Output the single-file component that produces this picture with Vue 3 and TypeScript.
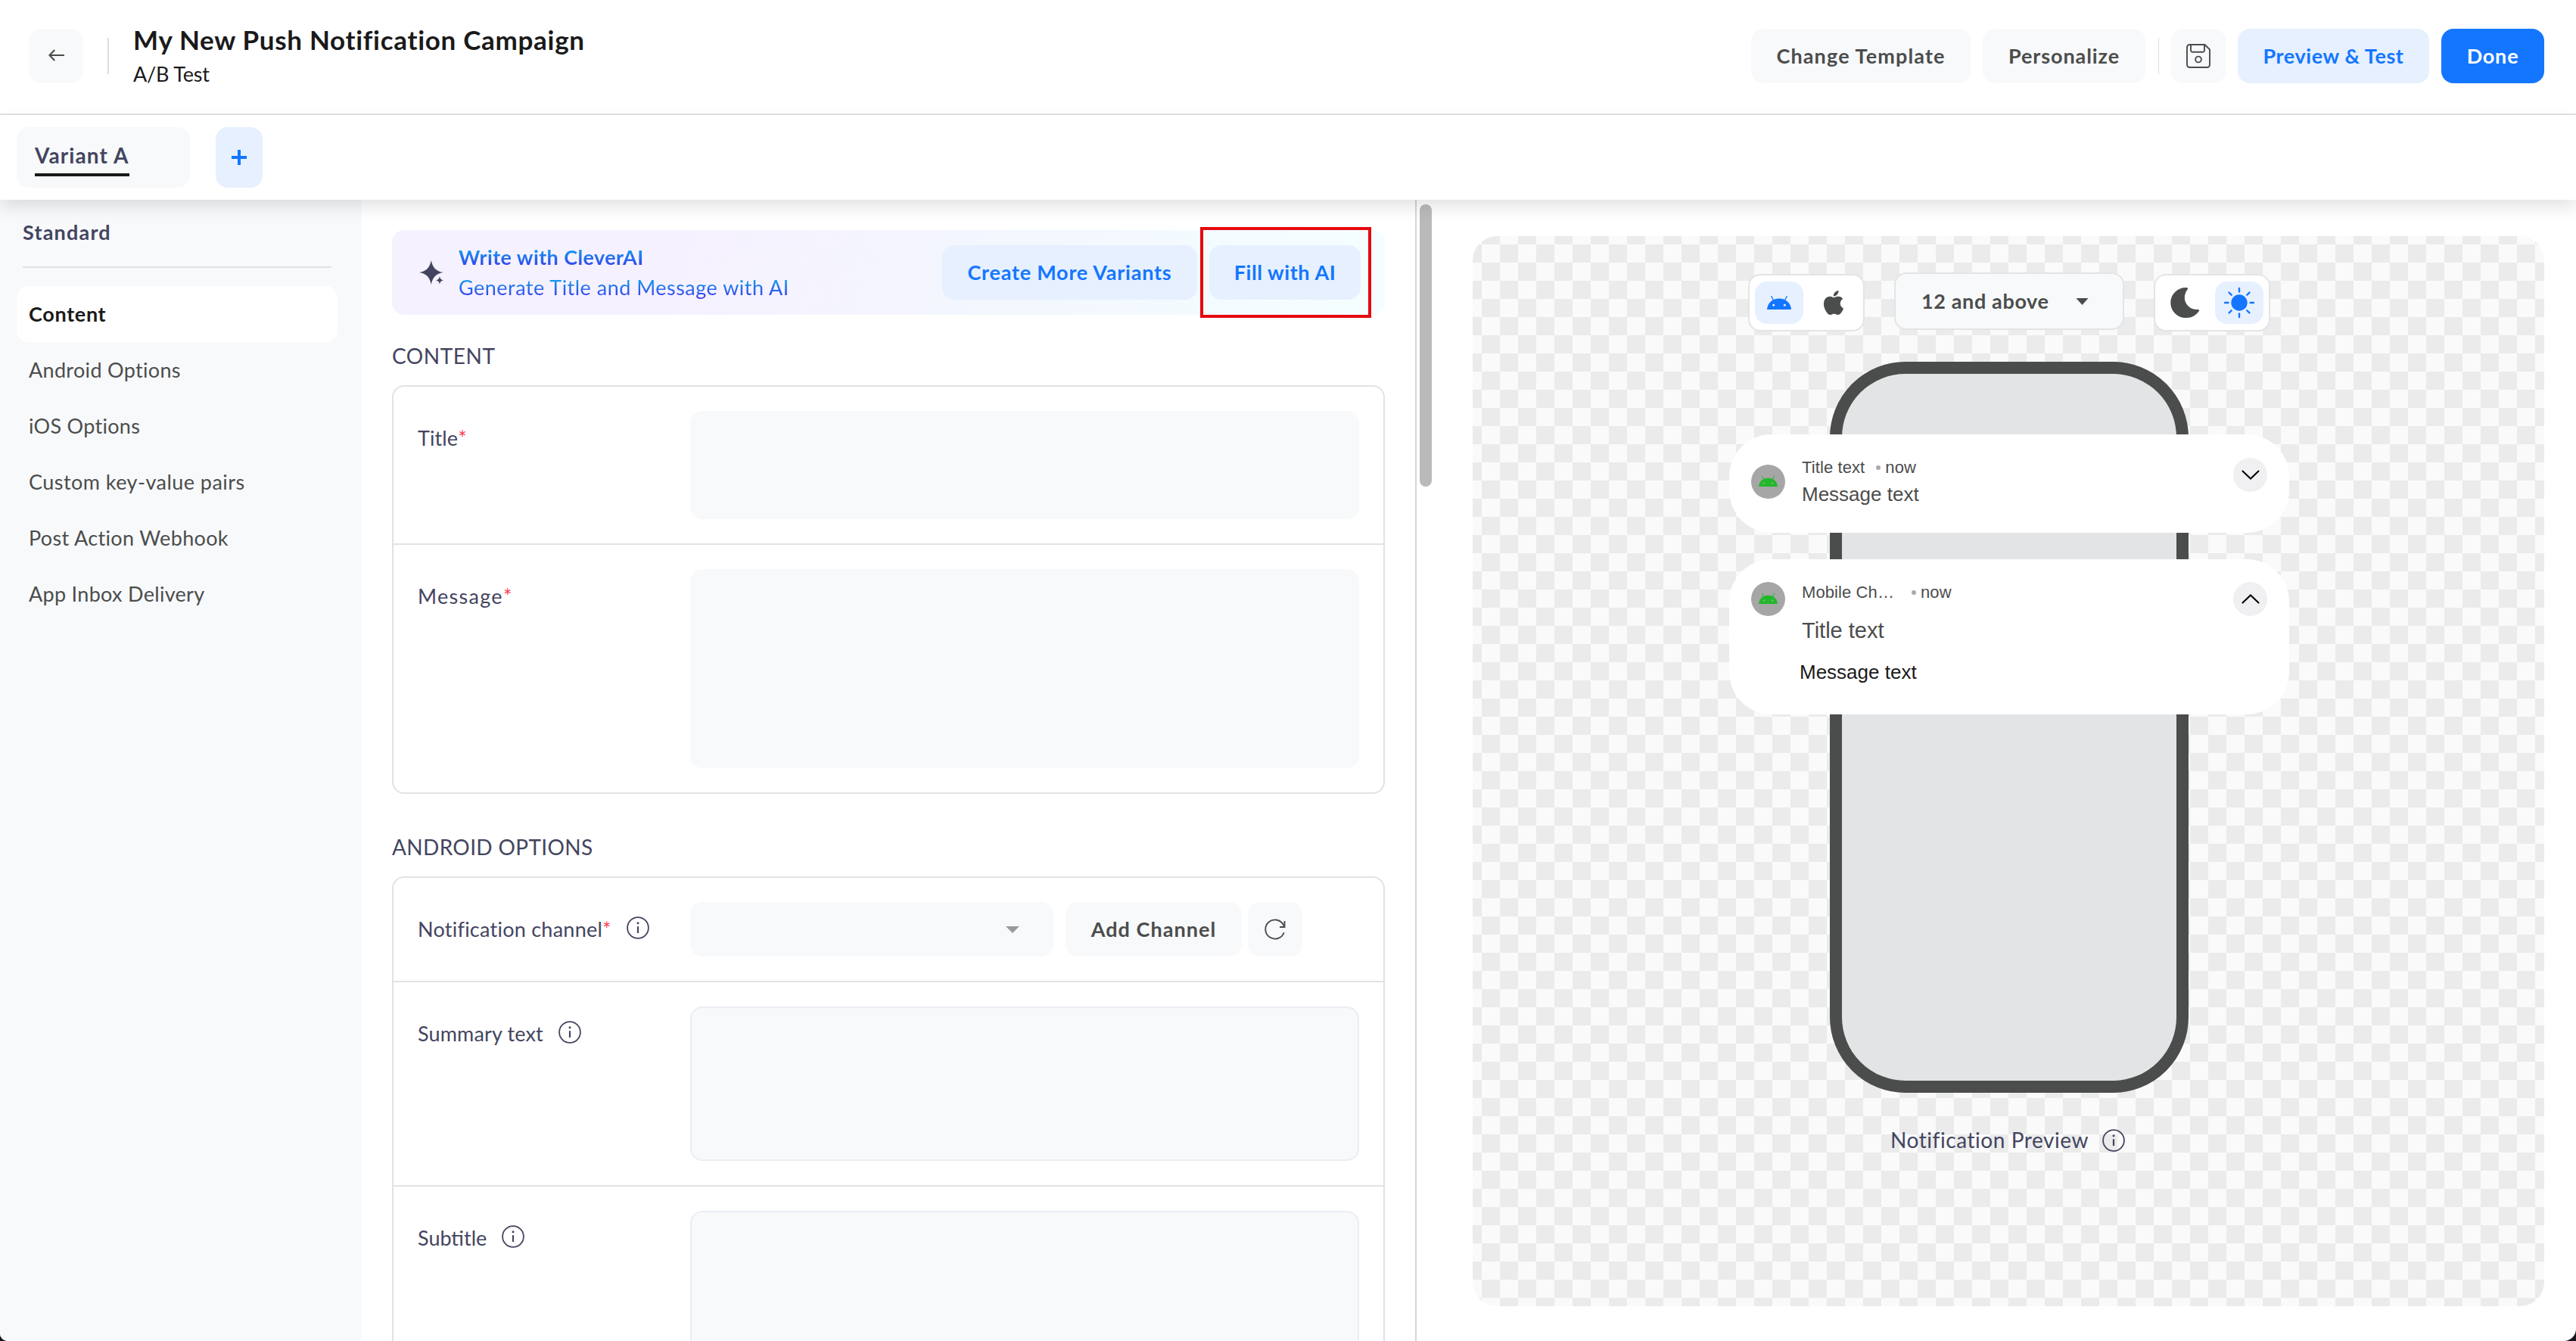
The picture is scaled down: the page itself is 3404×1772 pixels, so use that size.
<script setup lang="ts">
import { h, type FunctionalComponent } from 'vue'

interface MenuItem {
  label: string
  spacing: string
  active?: boolean
}

const menu: MenuItem[] = [
  { label: 'Content', spacing: '0.68px', active: true },
  { label: 'Android Options', spacing: '0.32px' },
  { label: 'iOS Options', spacing: '0.29px' },
  { label: 'Custom key-value pairs', spacing: '0.46px' },
  { label: 'Post Action Webhook', spacing: '0.35px' },
  { label: 'App Inbox Delivery', spacing: '0.3px' },
]

const InfoIcon: FunctionalComponent = () =>
  h('svg', { width: 30, height: 30, viewBox: '0 0 30 30', fill: 'none', style: 'display:block;flex:none' }, [
    h('circle', { cx: 15, cy: 15, r: 13.9, stroke: '#434560', 'stroke-width': 1.8 }),
    h('path', { d: 'M15 13.2V22', stroke: '#434560', 'stroke-width': 2.2 }),
    h('circle', { cx: 15, cy: 8.8, r: 1.5, fill: '#434560' }),
  ])

const AndroidIcon: FunctionalComponent<{ size: number; color: string; eye: string }> = (p) =>
  h('svg', { width: p.size, height: p.size * 0.5625, viewBox: '0 0 32 18', style: 'display:block' }, [
    h('path', { d: 'M0 18C.7 9.500 7 3.600 16 3.600S31.300 9.500 32 18Z', fill: p.color }),
    h('path', { d: 'M8.600 6L5.900.6M23.400 6L26.100.6', stroke: p.color, 'stroke-width': 1.3, 'stroke-linecap': 'round' }),
    h('circle', { cx: 8.7, cy: 12.2, r: 1.45, fill: p.eye }),
    h('circle', { cx: 23.3, cy: 12.2, r: 1.45, fill: p.eye }),
  ])
AndroidIcon.props = ['size', 'color', 'eye']

const rays = [0, 45, 90, 135, 180, 225, 270, 315]
</script>

<template>
  <div class="shell">
    <header class="header">
      <button class="btn back">
        <svg width="22" height="16" viewBox="0 0 22 16" fill="none" stroke="#4b4d4c" stroke-width="2.1">
          <path d="M8.200 1L1.500 8L8.200 15M1.500 8H21" />
        </svg>
      </button>
      <span class="rule"></span>
      <div class="titles">
        <h1>My New Push Notification Campaign</h1>
        <p>A/B Test</p>
      </div>
      <div class="actions">
        <button class="btn w-change">Change Template</button>
        <button class="btn w-person">Personalize</button>
        <span class="rule thin"></span>
        <button class="btn icon">
          <svg width="32" height="32" viewBox="0 0 32 32" fill="none" stroke="#4b4d4c" stroke-width="1.900">
            <path d="M4.500 1H24.500L31 7.500V27.500A3.500 3.500 0 0 1 27.500 31H4.500A3.500 3.500 0 0 1 1 27.500V4.500A3.500 3.500 0 0 1 4.500 1Z" />
            <path d="M6 1.500V8.500A2.300 2.300 0 0 0 8.300 10.800H21.700A2.300 2.300 0 0 0 24 8.500V1.500" />
            <circle cx="16" cy="20.500" r="3.900" />
          </svg>
        </button>
        <button class="btn soft w-preview">Preview &amp; Test</button>
        <button class="btn primary w-done">Done</button>
      </div>
    </header>

    <nav class="tabs">
      <div class="tab"><span>Variant A</span></div>
      <button class="add">
        <svg width="20" height="20" viewBox="0 0 20 20" stroke="#1476ff" stroke-width="4"><path d="M10 0V20M0 10H20" /></svg>
      </button>
    </nav>

    <div class="body">
      <aside class="side">
        <div class="side-title">Standard</div>
        <ul>
          <li v-for="m in menu" :key="m.label" :class="{ on: m.active }" :style="{ letterSpacing: m.spacing }">{{ m.label }}</li>
        </ul>
      </aside>

      <main class="form">
        <section class="ai">
          <svg class="spark" width="32" height="32" viewBox="0 0 32 32">
            <path d="M15.800 0C17.600 8.800 21.500 14.300 31.600 16C21.500 17.700 17.600 23.200 15.800 32C14 23.200 10.100 17.700 0 16C10.100 14.300 14 8.800 15.800 0Z" fill="#434560" />
            <path d="M27 18.500C27.700 22.800 28.800 25.500 33 26.500C28.800 27.500 27.700 30.200 27 34.500C26.300 30.200 25 27.500 20.500 26.500C25 25.500 26.300 22.800 27 18.500Z" fill="#f6f2ff" />
            <path d="M27 21.300C27.600 24.500 28.900 25.900 32 26.500C28.900 27.100 27.600 28.500 27 31.700C26.400 28.500 25.100 27.100 22 26.500C25.100 25.900 26.400 24.500 27 21.300Z" fill="#434560" />
          </svg>
          <div class="ai-text">
            <p class="strong">Write with CleverAI</p>
            <p>Generate Title and Message with AI</p>
          </div>
          <button class="btn soft w-create">Create More Variants</button>
          <button class="btn soft w-fill">Fill with AI<i class="marker"></i></button>
        </section>

        <h2 class="content-h">CONTENT</h2>
        <section class="card">
          <div class="row">
            <label class="l-title">Title<sup>*</sup></label>
            <div class="field title-field"></div>
          </div>
          <div class="row">
            <label class="l-message">Message<sup>*</sup></label>
            <div class="field message-field"></div>
          </div>
        </section>

        <h2 class="android-h">ANDROID OPTIONS</h2>
        <section class="card">
          <div class="row">
            <label class="l-channel">Notification channel<sup>*</sup><InfoIcon /></label>
            <div class="select">
              <svg width="18" height="9" viewBox="0 0 18 9"><path d="M0 0H18L9 9Z" fill="#98999b" /></svg>
            </div>
            <button class="btn w-add">Add Channel</button>
            <button class="btn icon refresh">
              <svg width="30" height="30" viewBox="0 0 30 30" fill="none" stroke="#4b4d4c" stroke-width="1.900">
                <path d="M26.700 19.200A12.600 12.600 0 1 1 26.300 9.800L27.300 11.800" />
                <path d="M27.500 4V12H21" />
              </svg>
            </button>
          </div>
          <div class="row">
            <label class="l-summary">Summary text<InfoIcon /></label>
            <div class="field area"></div>
          </div>
          <div class="row">
            <label>Subtitle<InfoIcon /></label>
            <div class="field area"></div>
          </div>
        </section>
      </main>

      <section class="side-preview">
        <div class="thumb"></div>
        <div class="canvas">
          <div class="toolbar">
            <div class="toggle">
              <span class="cell on"><AndroidIcon :size="32" color="#1476ff" eye="#e6f0ff" /></span>
              <span class="cell">
                <svg width="32" height="32" viewBox="0 0 16 16" fill="#4b4d4c">
                  <path d="M11.182.008C11.148-.03 9.923.023 8.857 1.180c-1.066 1.156-.902 2.482-.878 2.516s1.520.087 2.475-1.258.762-2.391.728-2.430m3.314 11.733c-.048-.096-2.325-1.234-2.113-3.422s1.675-2.789 1.698-2.854-.597-.790-1.254-1.157a3.700 3.700 0 0 0-1.563-.434c-.108-.003-.483-.095-1.254.116-.508.139-1.653.589-1.968.607-.316.018-1.256-.522-2.267-.665-.647-.125-1.333.131-1.824.328-.490.196-1.422.754-2.074 2.237-.652 1.482-.311 3.830-.067 4.560s.625 1.924 1.273 2.796c.576.984 1.340 1.667 1.659 1.899s1.219.386 1.843.067c.502-.308 1.408-.485 1.766-.472.357.013 1.061.154 1.782.539.571.197 1.111.115 1.652-.105.541-.221 1.324-1.059 2.238-2.758q.520-1.185.473-1.282" />
                </svg>
              </span>
            </div>
            <div class="version">
              12 and above
              <svg width="17" height="9" viewBox="0 0 17 9"><path d="M.5 0H16.500L8.500 9Z" fill="#4b4d4c" /></svg>
            </div>
            <div class="toggle">
              <span class="cell">
                <svg width="39" height="40" viewBox="0 0 39 40" fill="#4b4d4c">
                  <path d="M20.500 0C22.600 0 24.200 1 22.600 2.600A16 16 0 0 0 35.800 29C38.200 28.600 38.600 29.800 37.500 31.600A20 20 0 0 1 20 40A20 20 0 0 1 20.500 0Z" />
                </svg>
              </span>
              <span class="cell on">
                <svg width="40" height="40" viewBox="-20 -20 40 40">
                  <circle r="10.700" fill="#1476ff" />
                  <path v-for="a in rays" :key="a" :transform="`rotate(${a})`" d="M0 -14.500V-19" stroke="#1476ff" stroke-width="2.400" stroke-linecap="round" />
                </svg>
              </span>
            </div>
          </div>

          <div class="stage">
            <div class="phone"></div>
            <div class="notes">
              <article class="note collapsed">
                <span class="app"><AndroidIcon :size="25" color="#22b82a" eye="#a6a6a6" /></span>
                <div class="copy">
                  <p class="meta"><span>Title text</span><i></i>now</p>
                  <p class="msg">Message text</p>
                </div>
                <span class="chev">
                  <svg width="24" height="13" viewBox="0 0 24 13" fill="none" stroke="#000" stroke-width="2.100" stroke-linecap="round"><path d="M1.500 1.500L12 11.500L22.500 1.500" /></svg>
                </span>
              </article>
              <article class="note expanded">
                <span class="app"><AndroidIcon :size="25" color="#22b82a" eye="#a6a6a6" /></span>
                <div class="copy">
                  <p class="meta"><span class="channel">Mobile Ch…</span><i></i>now</p>
                  <p class="big">Title text</p>
                  <p class="msg dark">Message text</p>
                </div>
                <span class="chev">
                  <svg width="24" height="13" viewBox="0 0 24 13" fill="none" stroke="#000" stroke-width="2.100" stroke-linecap="round"><path d="M1.500 11.500L12 1.500L22.500 11.500" /></svg>
                </span>
              </article>
            </div>
          </div>

          <div class="caption">Notification Preview<InfoIcon /></div>
        </div>
      </section>
    </div>
  </div>
</template>

<style>
body {
  background: #1a1420;
}
</style>

<style scoped>
.shell,
.shell * {
  box-sizing: border-box;
  margin: 0;
  padding: 0;
}
.shell {
  width: 3404px;
  height: 1772px;
  overflow: hidden;
  display: flex;
  flex-direction: column;
  background: #fff;
  border-radius: 0 0 16px 10px;
  font-family: Lato, 'Open Sans', sans-serif;
  font-size: 27px;
  color: #434560;
}
svg {
  display: block;
  overflow: visible;
  flex: none;
}
.header {
  height: 152px;
  flex: none;
  border-bottom: 2px solid #e2e2e2;
  padding: 0 42px 0 38px;
  display: flex;
}
.btn {
  height: 72px;
  flex: none;
  border: 0;
  border-radius: 16px;
  background: #f8f9fb;
  color: #4b4d4c;
  font: 700 27px/72px Lato, sans-serif;
  text-align: center;
  white-space: nowrap;
}
.btn.soft {
  background: #e6f0ff;
  color: #1476ff;
}
.btn.primary {
  background: #1476ff;
  color: #fff;
}
.btn.icon,
.btn.back {
  width: 72px;
  padding: 0;
  display: flex;
  align-items: center;
  justify-content: center;
}
.btn.back {
  margin-top: 38px;
  padding: 0 0 2px 1px;
}
.rule {
  width: 2px;
  height: 48px;
  margin: 50px 0 0 32px;
  background: #dedede;
}
.titles {
  margin: 30px 0 0 32px;
  color: #1a1a1a;
}
.titles h1 {
  font: 700 35px/44px Lato, sans-serif;
  letter-spacing: 0.7px;
}
.titles p {
  margin-top: 8px;
  line-height: 32px;
  letter-spacing: -0.2px;
}
.actions {
  margin: 38px 0 0 auto;
  display: flex;
  gap: 16px;
}
.rule.thin {
  width: 1px;
  margin: 12px 0 0 1px;
}
.w-change {
  width: 290px;
  letter-spacing: 1.14px;
}
.w-person {
  width: 215px;
  letter-spacing: 0.91px;
}
.w-preview {
  width: 253px;
  letter-spacing: 0.58px;
}
.w-done {
  width: 136px;
  letter-spacing: 0.8px;
}
.w-create {
  width: 337px;
  letter-spacing: 0.77px;
}
.w-fill {
  width: 200px;
  letter-spacing: 0.57px;
  position: relative;
}
.w-add {
  width: 233px;
  letter-spacing: 1.04px;
  margin-left: 16px;
}
.refresh {
  margin-left: 8px;
}

.tabs {
  height: 112px;
  flex: none;
  display: flex;
  padding: 16px 22px;
  background: #fff;
  position: relative;
  z-index: 1;
  box-shadow: 0 10px 20px rgba(0, 0, 0, 0.11);
}
.tab {
  width: 229px;
  height: 80px;
  border-radius: 16px;
  background: #f8f9fb;
  padding: 17px 0 0 24px;
  font-weight: 700;
}
.tab span {
  display: inline-block;
  font-size: 28px;
  line-height: 41px;
  letter-spacing: 1.1px;
  height: 48px;
  border-bottom: 4px solid #1a1a1a;
}
.add {
  width: 62px;
  height: 80px;
  margin-left: 34px;
  border: 0;
  border-radius: 16px;
  background: #e6f0ff;
  display: flex;
  align-items: center;
  justify-content: center;
}

.body {
  flex: 1;
  min-height: 0;
  display: flex;
}
.side {
  width: 478px;
  flex: none;
  background: #f8f9fb;
  padding: 27px 32px 0 22px;
}
.side-title {
  margin: 0 8px;
  width: 408px;
  height: 63px;
  border-bottom: 2px solid #e2e2e2;
  font-weight: 700;
  line-height: 32px;
  letter-spacing: 1.2px;
}
.side ul {
  margin-top: 24px;
  list-style: none;
}
.side li {
  height: 74px;
  line-height: 73px;
  padding-left: 16px;
  border-radius: 16px;
  color: #4b4d4c;
}
.side li.on {
  background: #fff;
  color: #1a1a1a;
  font-weight: 700;
}

.form {
  width: 1394px;
  flex: none;
  height: 1508px;
  overflow: hidden;
  border-right: 2px solid #d6d6d6;
  padding: 40px 40px 0 40px;
}
.ai {
  height: 112px;
  border-radius: 16px;
  background: linear-gradient(100deg, #f6f1ff 28%, #f3f8fe 66%, #f5feff 100%);
  padding: 0 32px 0 36px;
  display: flex;
  align-items: center;
}
.ai-text {
  margin: 0 auto 1px 20px;
  letter-spacing: 0.48px;
}
.ai-text p {
  line-height: 40px;
  width: max-content;
  background: linear-gradient(180deg, #08c4ea, #4020f0);
  background-clip: text;
  -webkit-background-clip: text;
  color: transparent;
}
.ai-text .strong {
  font-weight: 700;
  letter-spacing: 0.4px;
}
.w-create {
  margin-right: 16px;
}
.marker {
  position: absolute;
  left: -12px;
  top: -24px;
  width: 226px;
  height: 120px;
  border: 4px solid #e60a0e;
}
h2 {
  font: 400 28px/40px Lato, sans-serif;
}
.content-h {
  margin: 34px 0 19px;
  letter-spacing: 0.55px;
}
.android-h {
  margin: 50px 0 19px;
  letter-spacing: 0.35px;
}
.card {
  border: 2px solid #e2e2e4;
  border-radius: 16px;
}
.row {
  padding: 32px;
  display: flex;
}
.row + .row {
  border-top: 2px solid #e2e2e4;
}
.row label {
  width: 360px;
  height: 72px;
  flex: none;
  line-height: 72px;
  display: flex;
  white-space: nowrap;
}
.row label svg {
  margin: 19px 0 0 20px;
}
.l-title {
  letter-spacing: 0.1px;
}
.l-message {
  letter-spacing: 1.3px;
}
.l-channel {
  letter-spacing: 0.25px;
}
.l-summary {
  letter-spacing: 0.15px;
}
sup {
  color: #ff3b52;
  font-size: 27px;
  line-height: 71px;
  letter-spacing: 0;
  margin-left: 6px;
}
.field {
  width: 884px;
  border-radius: 16px;
  background: #f8f9fb;
}
.title-field {
  height: 143px;
}
.message-field {
  height: 263px;
}
.area {
  height: 204px;
  border: 2px solid #ecedf4;
}
.select {
  width: 480px;
  height: 72px;
  border-radius: 16px;
  background: #f8f9fb;
  display: flex;
  align-items: center;
  justify-content: flex-end;
  padding-right: 45px;
}

.side-preview {
  flex: 1;
  display: flex;
  padding-left: 4px;
}
.thumb {
  width: 16px;
  height: 373px;
  margin-top: 6px;
  border-radius: 8px;
  background: #bababa;
}
.canvas {
  display: flow-root;
  width: 1416px;
  height: 1414px;
  margin: 48px 0 0 54px;
  border-radius: 32px;
  background: repeating-conic-gradient(#ebebeb 0 25%, #fafafa 0 50%) 12px 11px / 48px 48px;
}
.toolbar {
  display: flex;
  gap: 39px;
  margin: 48px 0 0 364px;
}
.toggle {
  width: 154px;
  height: 76px;
  margin-top: 2px;
  border: 2px solid #e2e4e6;
  border-radius: 16px;
  background: #fff;
  display: flex;
  gap: 8px;
  padding: 8px 7px;
}
.cell {
  width: 64px;
  height: 56px;
  border-radius: 16px;
  display: flex;
  align-items: center;
  justify-content: center;
}
.cell.on {
  background: #e6f0ff;
}
.version {
  width: 304px;
  height: 76px;
  border: 2px solid #e2e4e6;
  border-radius: 16px;
  background: #f8f9fb;
  color: #4b4d4c;
  font-weight: 700;
  line-height: 71px;
  letter-spacing: 0.63px;
  padding: 0 45px 0 34px;
  display: flex;
  justify-content: space-between;
}
.version svg {
  margin-top: 32px;
}
.stage {
  position: relative;
  width: 740px;
  height: 966px;
  margin: 40px 0 0 339px;
}
.phone {
  width: 474px;
  height: 966px;
  margin: 0 auto;
  border: 16px solid #4b4d4c;
  border-radius: 100px;
  background: #e2e4e6;
}
.notes {
  position: absolute;
  inset: 96px 0 auto;
  display: flex;
  flex-direction: column;
  gap: 35px;
}
.note {
  display: flex;
  background: #fff;
  border-radius: 56px;
  padding: 28px 29px 0 29px;
  color: #4b4d4c;
  font-family: 'Liberation Sans', Arial, sans-serif;
}
.collapsed {
  height: 130px;
}
.expanded {
  height: 205px;
}
.app {
  width: 45px;
  height: 45px;
  margin-top: 12px;
  border-radius: 50%;
  background: #a6a6a6;
  display: flex;
  align-items: center;
  justify-content: center;
}
.expanded .app {
  margin-top: 2px;
}
.copy {
  margin-left: 22px;
  flex: 1;
}
.meta {
  display: flex;
  align-items: center;
  font-size: 22px;
  line-height: 32px;
  letter-spacing: 0.1px;
}
.meta i {
  width: 6px;
  height: 6px;
  border-radius: 50%;
  background: #aaa;
  margin: 0 6px 0 15px;
}
.meta .channel {
  width: 130px;
}
.msg {
  margin-top: 1px;
  font-size: 26px;
  line-height: 36px;
}
.big {
  margin-top: 14px;
  font-size: 29px;
  line-height: 40px;
}
.msg.dark {
  margin: 17px 0 0 -3px;
  color: #1a1a1a;
}
.chev {
  width: 45px;
  height: 45px;
  margin-top: 3px;
  border-radius: 50%;
  background: #f0f0f2;
  display: flex;
  align-items: center;
  justify-content: center;
}
.expanded .chev {
  margin-top: 2px;
}
.caption {
  display: flex;
  gap: 18px;
  margin: 42px 0 0 552px;
  font-size: 28px;
  line-height: 40px;
  letter-spacing: 0.56px;
}
.caption svg {
  margin-top: 6px;
}
</style>
